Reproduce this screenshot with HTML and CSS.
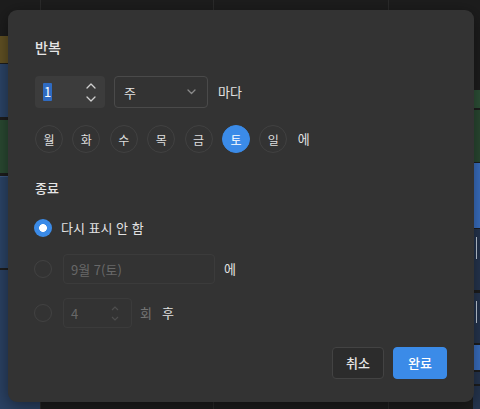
FILE: index.html
```html
<!DOCTYPE html>
<html lang="ko">
<head>
<meta charset="utf-8">
<title>반복</title>
<link rel="stylesheet" href="styles.css">
</head>
<body>
<div class="calendar">
  <div class="col col-a">
    <div class="ev ev-gold h27"></div>
    <div class="ev ev-blue h53 g1"></div>
    <div class="ev ev-green h53 g3"></div>
    <div class="ev ev-blue h92 g3 split"></div>
    <div class="ev ev-blue2 h140 g2"></div>
  </div>
  <div class="col col-b"></div>
  <div class="col col-c"></div>
  <div class="col col-d">
    <div class="ev ev-green2 h18"></div>
    <div class="ev ev-green h52 g2"></div>
    <div class="ev ev-bright h65 g1"></div>
    <div class="ev ev-navy h61 g1 mark"></div>
    <div class="ev ev-navy h50 g3 mark"></div>
    <div class="ev ev-bright h25 g2"></div>
    <div class="ev ev-navy h12 g2"></div>
    <div class="ev ev-navy h30 g2"></div>
  </div>
</div>

<div class="modal" role="dialog">
  <div class="heading title">반복</div>

  <div class="row interval">
    <div class="num-input">
      <span class="num-value"><span class="sel">1</span></span>
      <span class="spinner">
        <svg width="10" height="6" viewBox="0 0 10 6"><path d="M1 5 L5 1 L9 5" stroke="#cfcfcf" stroke-width="1.3" fill="none" stroke-linecap="round" stroke-linejoin="round"/></svg>
        <svg width="10" height="6" viewBox="0 0 10 6"><path d="M1 1 L5 5 L9 1" stroke="#cfcfcf" stroke-width="1.3" fill="none" stroke-linecap="round" stroke-linejoin="round"/></svg>
      </span>
    </div>
    <div class="select">
      <span>주</span>
      <svg width="9" height="6" viewBox="0 0 9 6"><path d="M1 1 L4.5 4.5 L8 1" stroke="#8a8a8a" stroke-width="1.3" fill="none" stroke-linecap="round" stroke-linejoin="round"/></svg>
    </div>
    <span class="label">마다</span>
  </div>

  <div class="row days">
    <span class="day">월</span>
    <span class="day">화</span>
    <span class="day">수</span>
    <span class="day">목</span>
    <span class="day">금</span>
    <span class="day on">토</span>
    <span class="day">일</span>
    <span class="label day-suffix">에</span>
  </div>

  <div class="heading sub">종료</div>

  <div class="row opt opt-1">
    <span class="radio checked"></span>
    <span class="label">다시 표시 안 함</span>
  </div>

  <div class="row opt opt-2">
    <span class="radio"></span>
    <div class="field date">9월 7(토)</div>
    <span class="label after">에</span>
  </div>

  <div class="row opt opt-3">
    <span class="radio"></span>
    <div class="field count">
      <span>4</span>
      <span class="spinner dim">
        <svg width="8" height="5" viewBox="0 0 8 5"><path d="M1 4 L4 1 L7 4" stroke="#4e4e4e" stroke-width="1.2" fill="none"/></svg>
        <svg width="8" height="5" viewBox="0 0 8 5"><path d="M1 1 L4 4 L7 1" stroke="#4e4e4e" stroke-width="1.2" fill="none"/></svg>
      </span>
    </div>
    <span class="label muted unit">회</span>
    <span class="label unit2">후</span>
  </div>

  <div class="actions">
    <button class="btn cancel">취소</button>
    <button class="btn primary">완료</button>
  </div>
</div>
</body>
</html>
```
FILE: styles.css
```css
html, body {
  margin: 0;
  padding: 0;
}

body {
  width: 480px;
  height: 409px;
  overflow: hidden;
  background: #1d1d1d;
  font-family: "Noto Sans CJK KR", "Noto Sans", sans-serif;
  color: #e2e2e2;
  position: relative;
}

/* calendar behind the dialog */
.calendar {
  display: grid;
  grid-template-columns: 40px 173px 175px 92px;
  height: 409px;
}

.col {
  border-left: 1px solid #2b2b2b;
  display: flex;
  flex-direction: column;
  overflow: hidden;
}

.col-a {
  border-left: none;
  padding-top: 36px;
}

.col-d {
  padding-top: 90px;
  padding-left: 84px;
}

.ev { flex: none; }
.ev-gold { background: #625224; }
.ev-blue { background: #2c4568; }
.ev-blue2 { background: #2b4264; }
.ev-green { background: #2a4a32; }
.ev-green2 { background: #2e5238; }
.ev-bright { background: #3b72c6; }
.ev-navy { background: #263650; }

.split { box-shadow: inset 0 16px 0 -15px #3d5a84; }

/* short accent bar at the start of an event title */
.mark {
  background: linear-gradient(#c8d2e0, #c8d2e0) no-repeat 3px 8px / 1px 22px, #263650;
}

.h12 { height: 12px; }
.h18 { height: 18px; }
.h25 { height: 25px; }
.h27 { height: 27px; }
.h30 { height: 30px; }
.h50 { height: 50px; }
.h52 { height: 52px; }
.h53 { height: 53px; }
.h61 { height: 61px; }
.h65 { height: 65px; }
.h92 { height: 92px; }
.h140 { height: 140px; }
.g1 { margin-top: 1px; }
.g2 { margin-top: 2px; }
.g3 { margin-top: 3px; }

/* dialog */
.modal {
  position: absolute;
  left: 8px;
  top: 10px;
  width: 466px;
  height: 392px;
  box-sizing: border-box;
  background: #333333;
  border-radius: 9px;
  box-shadow: 0 4px 18px rgba(0, 0, 0, 0.45);
  padding: 27px 27px 0 27px;
  display: flex;
  flex-direction: column;
}

.heading {
  line-height: 20px;
  height: 20px;
  color: #e6e6e6;
  font-weight: 500;
}

.title { font-size: 14px; }

.sub {
  font-size: 13px;
  margin-top: 25px;
}

.row {
  display: flex;
  align-items: center;
}

.label {
  font-size: 13px;
  line-height: 20px;
  color: #e2e2e2;
}

.interval {
  margin-top: 19px;
  height: 32px;
}

.num-input {
  width: 70px;
  height: 32px;
  box-sizing: border-box;
  background: #3c3c3c;
  border-radius: 4px;
  padding: 0 9px 0 8px;
  display: flex;
  align-items: center;
  justify-content: space-between;
}

.num-value {
  font-size: 13px;
  line-height: 18px;
  display: flex;
}

.sel {
  background: #2f6bc2;
  color: #ffffff;
  padding: 0 1px;
  border-radius: 1px;
}

.spinner {
  display: flex;
  flex-direction: column;
  gap: 7px;
}

.spinner svg { display: block; }

.select {
  margin-left: 9px;
  width: 94px;
  height: 32px;
  box-sizing: border-box;
  border: 1px solid #4a4a4a;
  border-radius: 4px;
  padding: 0 11px 0 9px;
  display: flex;
  align-items: center;
  justify-content: space-between;
  font-size: 13px;
  color: #e2e2e2;
}

.interval .label { margin-left: 10px; }

.days {
  margin-top: 17px;
  height: 28px;
  gap: 9.4px;
}

.day {
  width: 28px;
  height: 28px;
  box-sizing: border-box;
  border: 1.5px solid #414141;
  border-radius: 50%;
  display: flex;
  align-items: center;
  justify-content: center;
  font-size: 12px;
  color: #dedede;
}

.day.on {
  background: #3b8be8;
  border-color: #3b8be8;
  color: #ffffff;
}

.days .day-suffix { margin-left: 1px; }

.opt { height: 30px; }
.opt-1 { margin-top: 15px; }
.opt-2 { margin-top: 11px; }
.opt-3 { margin-top: 14px; }

.radio {
  width: 18px;
  height: 18px;
  box-sizing: border-box;
  border: 1.5px solid #424242;
  border-radius: 50%;
  flex: none;
  margin-left: -1px;
}

.radio.checked {
  border: none;
  background: radial-gradient(circle, #ffffff 0 3.6px, #3b8be8 4.2px);
}

.opt-1 .label { margin-left: 9px; }

.field {
  margin-left: 11px;
  height: 30px;
  box-sizing: border-box;
  border: 1px solid #3b3b3b;
  border-radius: 4px;
  display: flex;
  align-items: center;
  font-size: 13px;
  color: #686868;
  padding: 0 8px 0 7px;
}

.date { width: 152px; }

.count {
  width: 69px;
  justify-content: space-between;
  padding-right: 12px;
}

.spinner.dim { gap: 5px; }

.after { margin-left: 9px; }
.unit { margin-left: 8px; }
.unit2 { margin-left: 10px; }
.muted { color: #747474; }

.actions {
  margin-top: 19px;
  display: flex;
  justify-content: flex-end;
  gap: 9px;
}

.btn {
  height: 32px;
  box-sizing: border-box;
  border-radius: 4px;
  font-family: inherit;
  font-size: 13px;
  font-weight: 500;
  padding: 0;
  line-height: 20px;
}

.cancel {
  width: 52px;
  background: #2c2c2c;
  border: 1px solid #434343;
  color: #e6e6e6;
}

.primary {
  width: 54px;
  background: #3b8be8;
  border: 1px solid #3b8be8;
  color: #ffffff;
}
```
